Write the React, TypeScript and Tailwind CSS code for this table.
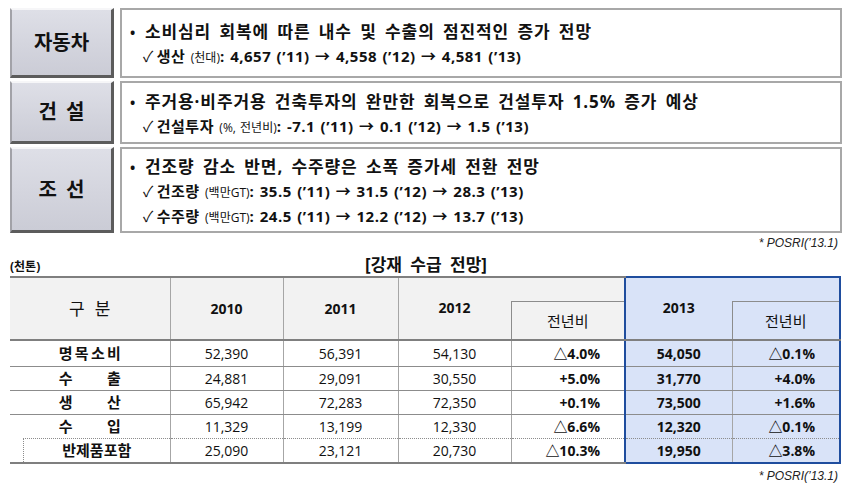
import React from 'react';

const Label: React.FC<{ chars: string[] }> = ({ chars }) => (
  <div className="w-[104px] shrink-0 flex items-center justify-center bg-linear-to-b from-[#dedfe7] to-[#cbccd6] border-l-2 border-t-2 border-r-[3px] border-b-[3px] border-l-[#a2a2a8] border-t-[#f6f6f8] border-r-[#5c5c5c] border-b-[#5c5c5c]">
    <div className="flex gap-[9px] text-[20px] font-bold text-[#111] leading-none">
      {chars.map((c) => (
        <span key={c}>{c}</span>
      ))}
    </div>
  </div>
);

const Head: React.FC<{ children: React.ReactNode }> = ({ children }) => (
  <div className="h-[25px] leading-[25px] text-[17px] font-bold text-[#111] whitespace-nowrap tracking-[0.9px] [word-spacing:3px]">
    <span className="inline-block w-[15px] text-[14px]">•</span>
    {children}
  </div>
);

const Sub: React.FC<{ name: string; unit: string; text: string }> = ({ name, unit, text }) => (
  <div className="h-[25px] leading-[25px] pl-[13px] text-[15px] font-bold text-[#111] whitespace-nowrap tracking-[0.5px] [word-spacing:1px]">
    <span className="font-normal mr-[3px]">✓</span>
    {name} <span className="text-[12px] font-normal tracking-normal">({unit})</span>: {text}
  </div>
);

const Section: React.FC<{ chars: string[]; h: string; children: React.ReactNode }> = ({ chars, h, children }) => (
  <div className={`flex gap-[6px] ${h}`}>
    <Label chars={chars} />
    <div className="flex-1 border-2 border-[#a8a8a8] bg-white pl-[8px] pt-[2px] flex flex-col justify-center">
      {children}
    </div>
  </div>
);

const rows = [
  { label: ['명', '목', '소', '비'], v: ['52,390', '56,391', '54,130'], d: '△4.0%', v13: '54,050', d13: '△0.1%' },
  { label: ['수', '출'], v: ['24,881', '29,091', '30,550'], d: '+5.0%', v13: '31,770', d13: '+4.0%' },
  { label: ['생', '산'], v: ['65,942', '72,283', '72,350'], d: '+0.1%', v13: '73,500', d13: '+1.6%' },
  { label: ['수', '입'], v: ['11,329', '13,199', '12,330'], d: '△6.6%', v13: '12,320', d13: '△0.1%' },
];

const dotTop = '[border-top-style:dotted] border-t border-t-[#8c8c8c]';

const App: React.FC = () => {
  return (
    <div className="w-[852px] h-[486px] bg-white px-[10px] pt-[8px] font-['Open_Sans','Noto_Sans_CJK_KR',sans-serif] text-[#111]">
      <div className="flex flex-col gap-[3px]">
        <Section chars={['자동차']} h="h-[70px]">
          <Head>소비심리 회복에 따른 내수 및 수출의 점진적인 증가 전망</Head>
          <Sub name="생산" unit="천대" text="4,657 (’11) → 4,558 (’12) → 4,581 (’13)" />
        </Section>
        <Section chars={['건', '설']} h="h-[63px]">
          <Head>주거용·비주거용 건축투자의 완만한 회복으로 건설투자 1.5% 증가 예상</Head>
          <Sub name="건설투자" unit="%, 전년비" text="-7.1 (’11) → 0.1 (’12) → 1.5 (’13)" />
        </Section>
        <Section chars={['조', '선']} h="h-[86px]">
          <Head>건조량 감소 반면, 수주량은 소폭 증가세 전환 전망</Head>
          <Sub name="건조량" unit="백만GT" text="35.5 (’11) → 31.5 (’12) → 28.3 (’13)" />
          <Sub name="수주량" unit="백만GT" text="24.5 (’11) → 12.2 (’12) → 13.7 (’13)" />
        </Section>
      </div>

      <div className="text-right pr-[4px] mt-[2px] h-[16px] leading-[16px] text-[12px] italic text-[#222] font-['Liberation_Sans',sans-serif]">
        * POSRI(’13.1)
      </div>

      <div className="grid grid-cols-3 items-end h-[22px] mt-[2px]">
        <div className="text-[12px] font-bold leading-[16px]">(천톤)</div>
        <div className="text-center text-[17px] font-bold leading-[20px] [word-spacing:4px]">[강재 수급 전망]</div>
        <div />
      </div>

      <table className="w-[830px] mt-[1px] border-collapse table-fixed">
        <colgroup>
          <col className="w-[160px]" />
          <col className="w-[113px]" />
          <col className="w-[115px]" />
          <col className="w-[113px]" />
          <col className="w-[114px]" />
          <col className="w-[107px]" />
          <col className="w-[108px]" />
        </colgroup>
        <thead>
          <tr className="h-[24px]">
            <th rowSpan={2} className="p-0 bg-[#f2f2f2] border-t-2 border-b-2 border-r border-t-[#7f7f7f] border-b-[#7f7f7f] border-r-[#a6a6a6] text-[17px] font-normal">
              <span className="inline-flex gap-[10px]">
                <span>구</span>
                <span>분</span>
              </span>
            </th>
            {['2010', '2011'].map((y) => (
              <th key={y} rowSpan={2} className="p-0 bg-[#f2f2f2] border-t-2 border-b-2 border-r border-t-[#7f7f7f] border-b-[#7f7f7f] border-r-[#a6a6a6] text-[14px] font-bold">
                {y}
              </th>
            ))}
            <th rowSpan={2} className="p-0 pb-[2px] bg-[#f2f2f2] border-t-2 border-b-2 border-t-[#7f7f7f] border-b-[#7f7f7f] text-[14px] font-bold">
              2012
            </th>
            <th className="p-0 bg-[#f2f2f2] border-t-2 border-t-[#7f7f7f]" />
            <th rowSpan={2} className="p-0 pb-[2px] bg-[#d9e3f8] border-t-2 border-l-2 border-b-2 border-t-[#1f4d9e] border-l-[#1f4d9e] border-b-[#7f7f7f] text-[14px] font-bold">
              2013
            </th>
            <th className="p-0 bg-[#d9e3f8] border-t-2 border-r-2 border-t-[#1f4d9e] border-r-[#1f4d9e]" />
          </tr>
          <tr className="h-[39px]">
            <th className="p-0 pt-[2px] bg-[#f2f2f2] border-t border-l border-b-2 border-t-[#8c8c8c] border-l-[#8c8c8c] border-b-[#7f7f7f] text-[15px] font-normal">
              전년비
            </th>
            <th className="p-0 pt-[2px] bg-[#d9e3f8] border-t border-l border-b-2 border-r-2 border-t-[#8c8c8c] border-l-[#8c8c8c] border-b-[#7f7f7f] border-r-[#1f4d9e] text-[15px] font-normal">
              전년비
            </th>
          </tr>
        </thead>
        <tbody className="text-[14px]">
          {rows.map((r, i) => {
            const last = i === rows.length - 1;
            const hb = last ? '' : 'border-b border-b-[#8c8c8c]';
            return (
              <tr key={i} className={i === 0 ? 'h-[26px]' : 'h-[24px]'}>
                <td className={`p-0 border-r border-r-[#a6a6a6] ${hb}`}>
                  <div className="w-[62px] mx-auto flex justify-between text-[15px] font-bold leading-none">
                    {r.label.map((c) => (
                      <span key={c}>{c}</span>
                    ))}
                  </div>
                </td>
                {r.v.map((v) => (
                  <td key={v} className={`p-0 text-center border-r border-r-[#a6a6a6] ${hb}`}>
                    {v}
                  </td>
                ))}
                <td className={`p-0 text-right pr-[24px] font-bold border-r border-r-[#a6a6a6] ${hb}`}>{r.d}</td>
                <td className={`p-0 text-center font-bold bg-[#d9e3f8] border-l-2 border-l-[#1f4d9e] border-r border-r-[#a6a6a6] ${hb}`}>{r.v13}</td>
                <td className={`p-0 text-right pr-[24px] font-bold bg-[#d9e3f8] border-r-2 border-r-[#1f4d9e] ${hb}`}>{r.d13}</td>
              </tr>
            );
          })}
          <tr className="h-[25px]">
            <td className="p-0 h-[25px] border-b-2 border-b-[#7f7f7f] border-r border-r-[#a6a6a6]">
              <div className="ml-[13px] h-full border-l border-t border-dotted border-[#8c8c8c] flex items-center justify-center text-[15px] font-bold leading-none">
                반제품포함
              </div>
            </td>
            {['25,090', '23,121', '20,730'].map((v) => (
              <td key={v} className={`p-0 text-center ${dotTop} border-b-2 border-b-[#7f7f7f] border-r border-r-[#a6a6a6]`}>
                {v}
              </td>
            ))}
            <td className={`p-0 text-right pr-[24px] font-bold ${dotTop} border-b-2 border-b-[#7f7f7f] border-r border-r-[#a6a6a6]`}>
              △10.3%
            </td>
            <td className={`p-0 text-center font-bold bg-[#d9e3f8] ${dotTop} border-l-2 border-l-[#1f4d9e] border-b-2 border-b-[#1f4d9e] border-r border-r-[#a6a6a6]`}>
              19,950
            </td>
            <td className={`p-0 text-right pr-[24px] font-bold bg-[#d9e3f8] ${dotTop} border-r-2 border-r-[#1f4d9e] border-b-2 border-b-[#1f4d9e]`}>
              △3.8%
            </td>
          </tr>
        </tbody>
      </table>

      <div className="text-right pr-[4px] mt-[4px] h-[16px] leading-[16px] text-[12px] italic text-[#222] font-['Liberation_Sans',sans-serif]">
        * POSRI(’13.1)
      </div>
    </div>
  );
};

export default App;
